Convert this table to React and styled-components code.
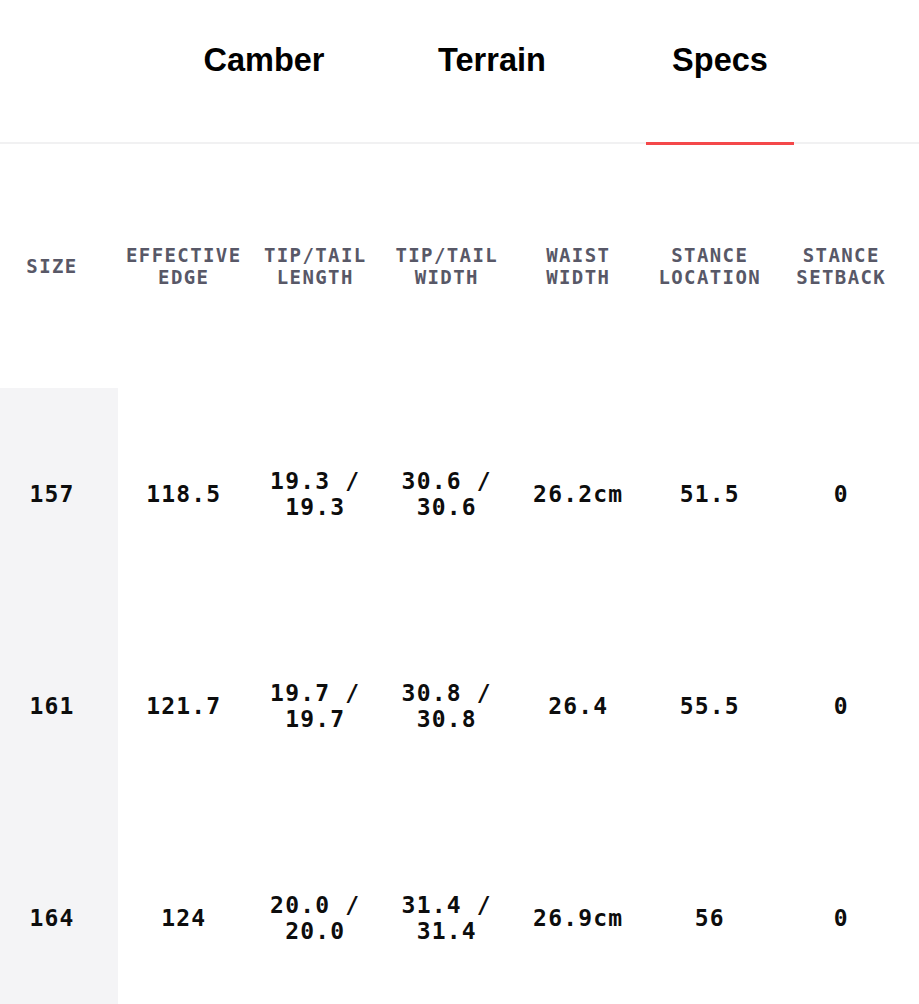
import React from "react";
import styled, { createGlobalStyle } from "styled-components";

const GlobalStyle = createGlobalStyle`
  body {
    margin: 0;
    background: #ffffff;
    font-family: "Liberation Sans", Arial, sans-serif;
  }
`;

const TABS = ["Camber", "Terrain", "Specs"];

const HEADERS = [
  "SIZE",
  "EFFECTIVE EDGE",
  "TIP/TAIL LENGTH",
  "TIP/TAIL WIDTH",
  "WAIST WIDTH",
  "STANCE LOCATION",
  "STANCE SETBACK",
];

const ROWS = [
  ["157", "118.5", "19.3 / 19.3", "30.6 / 30.6", "26.2cm", "51.5", "0"],
  ["161", "121.7", "19.7 / 19.7", "30.8 / 30.8", "26.4", "55.5", "0"],
  ["164", "124", "20.0 / 20.0", "31.4 / 31.4", "26.9cm", "56", "0"],
];

function App() {
  return (
    <Page>
      <GlobalStyle />
      <TabBar>
        {TABS.map((t) => (
          <Tab key={t} $active={t === "Specs"}>
            {t}
          </Tab>
        ))}
      </TabBar>
      <Table>
        {HEADERS.map((h, i) => (
          <HeadCell key={h} $first={i === 0}>
            {h}
          </HeadCell>
        ))}
        {ROWS.map((row) =>
          row.map((v, i) => (
            <Cell key={row[0] + i} $first={i === 0}>
              <span>{v}</span>
            </Cell>
          ))
        )}
      </Table>
    </Page>
  );
}

export default App;

const Page = styled.div`
  width: 919px;
  overflow: hidden;
`;

const TabBar = styled.nav`
  display: flex;
  padding: 40px 0 0 150px;
  height: 102px;
  border-bottom: 2px solid #f1f1f2;
`;

const Tab = styled.div`
  position: relative;
  width: 228px;
  text-align: center;
  font-size: 32.5px;
  line-height: 40px;
  font-weight: 700;
  color: #000;

  &::after {
    content: "";
    display: ${(p) => (p.$active ? "block" : "none")};
    position: absolute;
    left: 50%;
    bottom: -3px;
    width: 148px;
    height: 3px;
    transform: translateX(-50%);
    background: #f4484a;
  }
`;

const Table = styled.div`
  display: grid;
  grid-template-columns: 118px repeat(6, 131.5px);
  grid-template-rows: 244px repeat(3, 212px);
  font-family: "DejaVu Sans Mono", "Liberation Mono", monospace;
  font-weight: 700;
`;

const HeadCell = styled.div`
  display: flex;
  align-items: center;
  justify-content: center;
  text-align: center;
  padding: 0 ${(p) => (p.$first ? "14px" : "2px")} 0 ${(p) => (p.$first ? "0" : "2px")};
  font-size: 19px;
  line-height: 22px;
  letter-spacing: 1.4px;
  color: #585867;
`;

const Cell = styled.div`
  display: flex;
  align-items: center;
  justify-content: center;
  text-align: center;
  padding: 0 ${(p) => (p.$first ? "14px" : "4px")} 0 ${(p) => (p.$first ? "0" : "4px")};
  background: ${(p) => (p.$first ? "#f4f4f6" : "transparent")};
  font-size: 23px;
  line-height: 26px;
  letter-spacing: 1.2px;
  color: #0d0d0d;
`;
